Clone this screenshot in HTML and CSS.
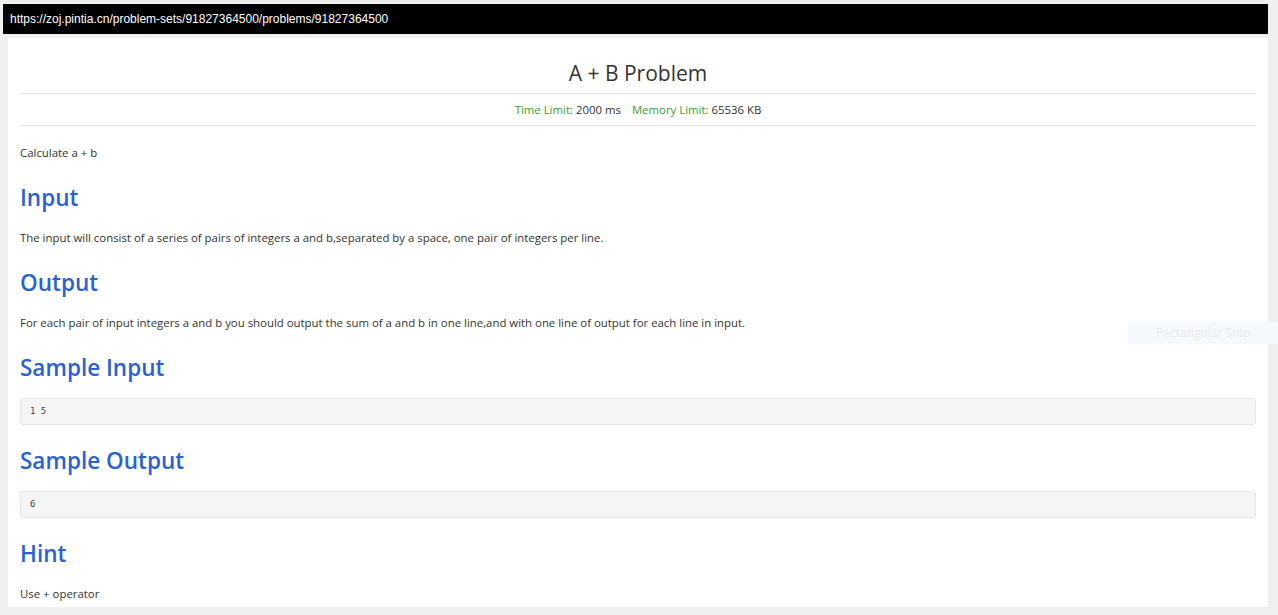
FILE: index.html
```html
<!DOCTYPE html>
<html>
<head>
<meta charset="utf-8">
<link rel="stylesheet" href="styles.css">
</head>
<body>
<div class="page">
  <div class="urlbar">https://zoj.pintia.cn/problem-sets/91827364500/problems/91827364500</div>
  <div class="panel">
    <h1 class="title">A + B Problem</h1>
    <div class="limits"><span class="lbl">Time Limit:</span> 2000 ms <span class="gap"></span><span class="lbl">Memory Limit:</span> 65536 KB</div>
    <div class="content">
      <p class="first">Calculate a + b</p>
      <h2>Input</h2>
      <p>The input will consist of a series of pairs of integers a and b,separated by a space, one pair of integers per line.</p>
      <h2>Output</h2>
      <p>For each pair of input integers a and b you should output the sum of a and b in one line,and with one line of output for each line in input.</p>
      <h2>Sample Input</h2>
      <pre>1 5</pre>
      <h2>Sample Output</h2>
      <pre>6</pre>
      <h2>Hint</h2>
      <p class="last">Use + operator</p>
    </div>
  </div>
  <div class="snip">Rectangular Snip</div>
</div>
</body>
</html>
```
FILE: styles.css
```css
html, body {
  margin: 0;
  padding: 0;
  background: #efefef;
}
.page {
  padding: 4px 10px 8px 3px;
  height: 615px;
  box-sizing: border-box;
  font-family: "Open Sans", "Noto Sans", sans-serif;
  color: #333;
}
.urlbar {
  height: 30px;
  background: #000;
  color: #fff;
  font-family: "Liberation Sans", Arial, sans-serif;
  font-size: 12px;
  padding-left: 7px;
  display: flex;
  align-items: center;
}
.panel {
  margin: 4px 0 0 5px;
  background: #fff;
  height: 569px;
  padding: 0 12px;
  overflow: hidden;
}
.title {
  margin: 0;
  padding-top: 20px;
  padding-bottom: 5px;
  font-size: 21px;
  line-height: 30px;
  font-weight: 400;
  text-align: center;
  color: #333;
  border-bottom: 1px solid #e8e8e8;
}
.limits {
  text-align: center;
  font-size: 11.4px;
  line-height: 20px;
  padding: 6px 0 5px;
  border-bottom: 1px solid #e8e8e8;
  color: #333;
}
.lbl {
  color: #3c9a3c;
}
.gap {
  display: inline-block;
  width: 8px;
}
.content {
  font-size: 11.4px;
}
.content p {
  margin: 0;
  line-height: 20px;
}
.content p.first {
  margin-top: 17px;
}
.content p.last {
  margin-top: 1px;
}
.content h2 {
  margin: 18px 0 14px;
  padding-top: 1px;
  font-size: 22.5px;
  line-height: 32px;
  font-weight: 600;
  color: #2a62d2;
}
.content h2 + pre {
  margin-top: 3px;
}
.content pre {
  margin: 0;
  height: 27px;
  box-sizing: border-box;
  background: #f5f5f5;
  border: 1px solid #e6e6e6;
  border-radius: 3px;
  padding: 0 9px;
  font-family: "DejaVu Sans Mono", monospace;
  font-size: 9px;
  line-height: 25px;
  color: #444;
}
.content pre + h2 {
  margin-top: 19px;
}
.snip {
  position: absolute;
  left: 1128px;
  top: 322px;
  width: 150px;
  height: 22px;
  background: #f5f9fd;
  color: #ecebeb;
  font-size: 12px;
  line-height: 22px;
  text-align: center;
  font-family: "Open Sans", sans-serif;
}
```
